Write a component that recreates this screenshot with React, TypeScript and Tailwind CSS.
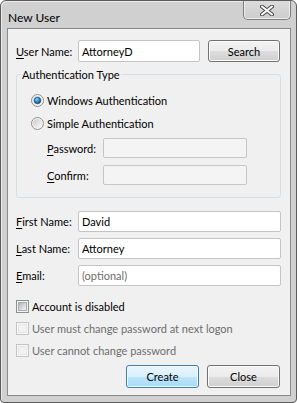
import React from "react";

const btnGray =
  "bg-[linear-gradient(to_bottom,#f2f2f2_0%,#ebebeb_50%,#dddddd_51%,#cfcfcf_100%)] border border-[#707070] rounded-[3px] shadow-[inset_0_0_0_1px_#fcfcfc]";
const btnBlue =
  "bg-[linear-gradient(to_bottom,#eaf6fd_0%,#d9f0fc_50%,#bee6fd_51%,#a7d9f5_100%)] border border-[#3c7fb1] rounded-[3px] shadow-[inset_0_0_0_1px_#f4fbfe]";

function Radio({ checked }: { checked?: boolean }) {
  return (
    <svg width="13" height="13" viewBox="0 0 13 13" className="shrink-0">
      <defs>
        <linearGradient id={checked ? "rgc" : "rgu"} x1="0" y1="0" x2="1" y2="1">
          <stop offset="0" stopColor="#c9c9c9" />
          <stop offset="1" stopColor="#fbfbfb" />
        </linearGradient>
        <radialGradient id="dotg" cx="0.4" cy="0.35" r="0.7">
          <stop offset="0" stopColor="#9bdcfb" />
          <stop offset="0.45" stopColor="#2f8ed4" />
          <stop offset="1" stopColor="#0f3f69" />
        </radialGradient>
      </defs>
      <circle cx="6.5" cy="6.5" r="6" fill="#f4f4f4" stroke="#8e8f8f" />
      <circle cx="6.5" cy="6.5" r="4.6" fill={`url(#${checked ? "rgc" : "rgu"})`} />
      {checked && <circle cx="6.5" cy="6.5" r="3.3" fill="url(#dotg)" stroke="#1d4c72" strokeWidth="0.6" />}
    </svg>
  );
}

function Check({ disabled }: { disabled?: boolean }) {
  return (
    <div
      className={`w-[13px] h-[13px] shrink-0 border p-[1px] ${
        disabled ? "border-[#c4c4c4] bg-[#f7f7f7]" : "border-[#8e8f8f] bg-[#f4f4f4]"
      }`}
    >
      <div
        className={`w-full h-full ${
          disabled
            ? "bg-[#f2f2f2] border border-[#e6e6e6]"
            : "bg-[linear-gradient(135deg,#b0b4b9_0%,#e2e3e5_70%,#f0f0f1_100%)] border border-[#a9adb2]"
        }`}
      />
    </div>
  );
}

function Input({ value, placeholder, w, h, disabled }: { value?: string; placeholder?: string; w: string; h: string; disabled?: boolean }) {
  return (
    <div
      className={`${w} ${h} shrink-0 rounded-[2px] border flex items-center pl-[3px] ${
        disabled ? "bg-[#f4f4f4] border-[#c6c6c6]" : "bg-white border-[#c2c4c8]"
      }`}
    >
      {value ? <span className="text-black">{value}</span> : <span className="text-[#6d6d6d]">{placeholder}</span>}
    </div>
  );
}

function Acc({ k, rest }: { k: string; rest: string }) {
  return (
    <span className="whitespace-nowrap">
      <span className="underline underline-offset-[2px] decoration-[1px]">{k}</span>
      {rest}
    </span>
  );
}

export default function App() {
  return (
    <div className="w-[297px] h-[403px] bg-[#d0d0d0] border border-[#5c5c5c] rounded-t-[6px] rounded-b-[4px] pl-[6px] pr-[5px] pb-[6px] flex flex-col text-[11px] leading-[15px] text-black whitespace-nowrap font-['Lato','Noto_Sans',sans-serif] shadow-[inset_1px_1px_0_#ececec]">
      <div className="h-[27px] flex justify-between items-start">
        <div className="pl-[1px] pt-[9px] text-[12px]">New User</div>
        <div className="w-[48px] h-[19px] border border-t-0 border-[#7d7d7d] rounded-b-[5px] bg-[linear-gradient(to_bottom,#dcdcdc,#cdcdcd)] shadow-[inset_0_-1px_0_#ededed,inset_1px_0_0_#ededed,inset_-1px_0_0_#ededed] flex items-center justify-center">
          <svg width="14" height="11" viewBox="0 0 14 11">
            <path d="M2 1.5 L12 9.5 M12 1.5 L2 9.5" stroke="#4a4a4a" strokeWidth="4" strokeLinecap="round" />
            <path d="M2 1.5 L12 9.5 M12 1.5 L2 9.5" stroke="#ffffff" strokeWidth="2" strokeLinecap="round" />
          </svg>
        </div>
      </div>
      <div className="flex-1 border border-[#8a8a8a] bg-[#f0f0f0] flex flex-col pl-[8px] pr-[9px] pt-[11px]">
        {/* User name */}
        <div className="flex items-center h-[22px]">
          <div className="w-[62px] shrink-0">
            <Acc k="U" rest="ser Name:" />
          </div>
          <Input value="AttorneyD" w="w-[122px]" h="h-[22px]" />
          <div className={`ml-[8px] w-[72px] h-[22px] flex items-center justify-center ${btnGray}`}>Search</div>
        </div>

        {/* Group box */}
        <div className="relative mt-[12px] h-[124px] border border-[#d5dfe5] rounded-[3px] flex flex-col pt-[14px]">
          <span className="absolute left-[4px] top-[-8px] px-[1px] bg-[#f0f0f0]">Authentication Type</span>
          <div className="h-[23px] flex items-center pl-[14px] gap-[3px]">
            <Radio checked />
            <span>Windows Authentication</span>
          </div>
          <div className="h-[23px] flex items-center pl-[14px] gap-[3px]">
            <Radio />
            <span>Simple Authentication</span>
          </div>
          <div className="mt-[3px] flex items-center pl-[30px]">
            <div className="w-[56px] shrink-0">
              <Acc k="P" rest="assword:" />
            </div>
            <Input disabled w="w-[144px]" h="h-[20px]" />
          </div>
          <div className="mt-[7px] flex items-center pl-[30px]">
            <div className="w-[56px] shrink-0">
              <Acc k="C" rest="onfirm:" />
            </div>
            <Input disabled w="w-[144px]" h="h-[20px]" />
          </div>
        </div>

        {/* Names */}
        <div className="mt-[13px] flex items-center">
          <div className="w-[62px] shrink-0">
            <Acc k="F" rest="irst Name:" />
          </div>
          <Input value="David" w="w-[203px]" h="h-[21px]" />
        </div>
        <div className="mt-[6px] flex items-center">
          <div className="w-[62px] shrink-0">
            <Acc k="L" rest="ast Name:" />
          </div>
          <Input value="Attorney" w="w-[203px]" h="h-[21px]" />
        </div>
        <div className="mt-[6px] flex items-center">
          <div className="w-[62px] shrink-0">
            <Acc k="E" rest="mail:" />
          </div>
          <Input placeholder="(optional)" w="w-[203px]" h="h-[21px]" />
        </div>

        {/* Checkboxes */}
        <div className="mt-[9px] flex flex-col">
          <div className="h-[22px] flex items-center gap-[3px]">
            <Check />
            <span>Account is disabled</span>
          </div>
          <div className="h-[22px] flex items-center gap-[3px] text-[#6d6d6d]">
            <Check disabled />
            <span>User must change password at next logon</span>
          </div>
          <div className="h-[22px] flex items-center gap-[3px] text-[#6d6d6d]">
            <Check disabled />
            <span>User cannot change password</span>
          </div>
        </div>

        {/* Buttons */}
        <div className="mt-[4px] flex justify-end gap-[8px] pr-[1px]">
          <div className={`w-[73px] h-[23px] flex items-center justify-center ${btnBlue}`}>Create</div>
          <div className={`w-[73px] h-[23px] flex items-center justify-center ${btnGray}`}>Close</div>
        </div>
      </div>
    </div>
  );
}
